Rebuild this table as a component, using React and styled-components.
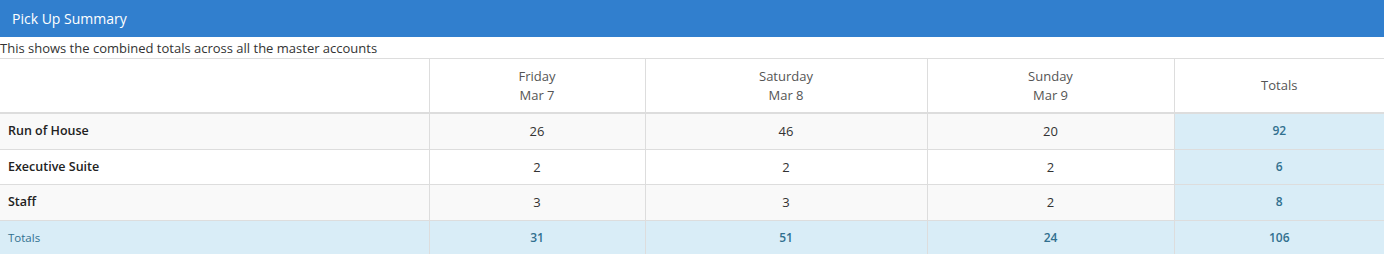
import React from 'react';
import styled, { createGlobalStyle } from 'styled-components';

const Global = createGlobalStyle`
  body{
    margin:0;
    background:#fff;
    font-family:"Open Sans", "Liberation Sans", sans-serif;
    font-size:13px;
    color:#333;
  }
`

const Panel = styled.div`
  width:1384px;
`

const Title_bar = styled.div`
  height:37px;
  background-color:#317fce;
  color:#fff;
  font-size:14px;
  display:flex;
  align-items:center;
  padding-left:12px;
  box-sizing:border-box;
`

const Sub_text = styled.p`
  margin:0;
  height:21px;
  line-height:20px;
  padding-top:1px;
  box-sizing:border-box;
  font-size:13px;
  color:#333;
`

const Table = styled.table`
  width:100%;
  border-collapse:collapse;
  table-layout:fixed;
  border-top:1px solid #ddd;
`

const Col = styled.col`
  width:${p => p.w}px;
`

const Th = styled.th`
  font-weight:normal;
  color:#555;
  text-align:center;
  padding:8px;
  line-height:18.5px;
  border-left:1px solid #ddd;
  border-bottom:2px solid #ddd;
  &:first-child{ border-left:none; }
`

const Row = styled.tr`
  background-color:${p => p.total ? '#d9edf7' : (p.odd ? '#f9f9f9' : '#fff')};
`

const Label = styled.td`
  padding:8px;
  line-height:18.5px;
  border-bottom:1px solid #ddd;
  font-weight:${p => p.total ? 'normal' : 600};
  font-size:${p => p.total ? '11.5px' : '12.5px'};
  color:${p => p.total ? '#31708f' : '#222'};
`

const Cell = styled.td`
  padding:8px;
  line-height:18.5px;
  text-align:center;
  border-left:1px solid #ddd;
  border-bottom:1px solid #ddd;
  font-size:${p => p.blue ? '12px' : '13px'};
  font-weight:${p => p.blue ? 600 : 'normal'};
  color:${p => p.blue ? '#31708f' : '#333'};
  background-color:${p => p.blue ? '#d9edf7' : 'transparent'};
`

const days = [
  {day:'Friday', date:'Mar 7'},
  {day:'Saturday', date:'Mar 8'},
  {day:'Sunday', date:'Mar 9'},
]

const rows = [
  {name:'Run of House', vals:[26,46,20], total:92},
  {name:'Executive Suite', vals:[2,2,2], total:6},
  {name:'Staff', vals:[3,3,2], total:8},
]

export default function App(){
  return (
    <>
      <Global/>
      <Panel>
        <Title_bar>Pick Up Summary</Title_bar>
        <Sub_text>This shows the combined totals across all the master accounts</Sub_text>
        <Table>
          <colgroup>
            <Col w={429}/>
            <Col w={216}/>
            <Col w={282}/>
            <Col w={247}/>
            <Col w={210}/>
          </colgroup>
          <thead>
            <tr>
              <Th></Th>
              {days.map(d => (
                <Th key={d.day}>{d.day}<br/>{d.date}</Th>
              ))}
              <Th>Totals</Th>
            </tr>
          </thead>
          <tbody>
            {rows.map((r, i) => (
              <Row key={r.name} odd={i % 2 === 0}>
                <Label>{r.name}</Label>
                {r.vals.map((v, j) => <Cell key={j}>{v}</Cell>)}
                <Cell blue>{r.total}</Cell>
              </Row>
            ))}
            <Row total>
              <Label total>Totals</Label>
              <Cell blue>31</Cell>
              <Cell blue>51</Cell>
              <Cell blue>24</Cell>
              <Cell blue>106</Cell>
            </Row>
          </tbody>
        </Table>
      </Panel>
    </>
  );
}
